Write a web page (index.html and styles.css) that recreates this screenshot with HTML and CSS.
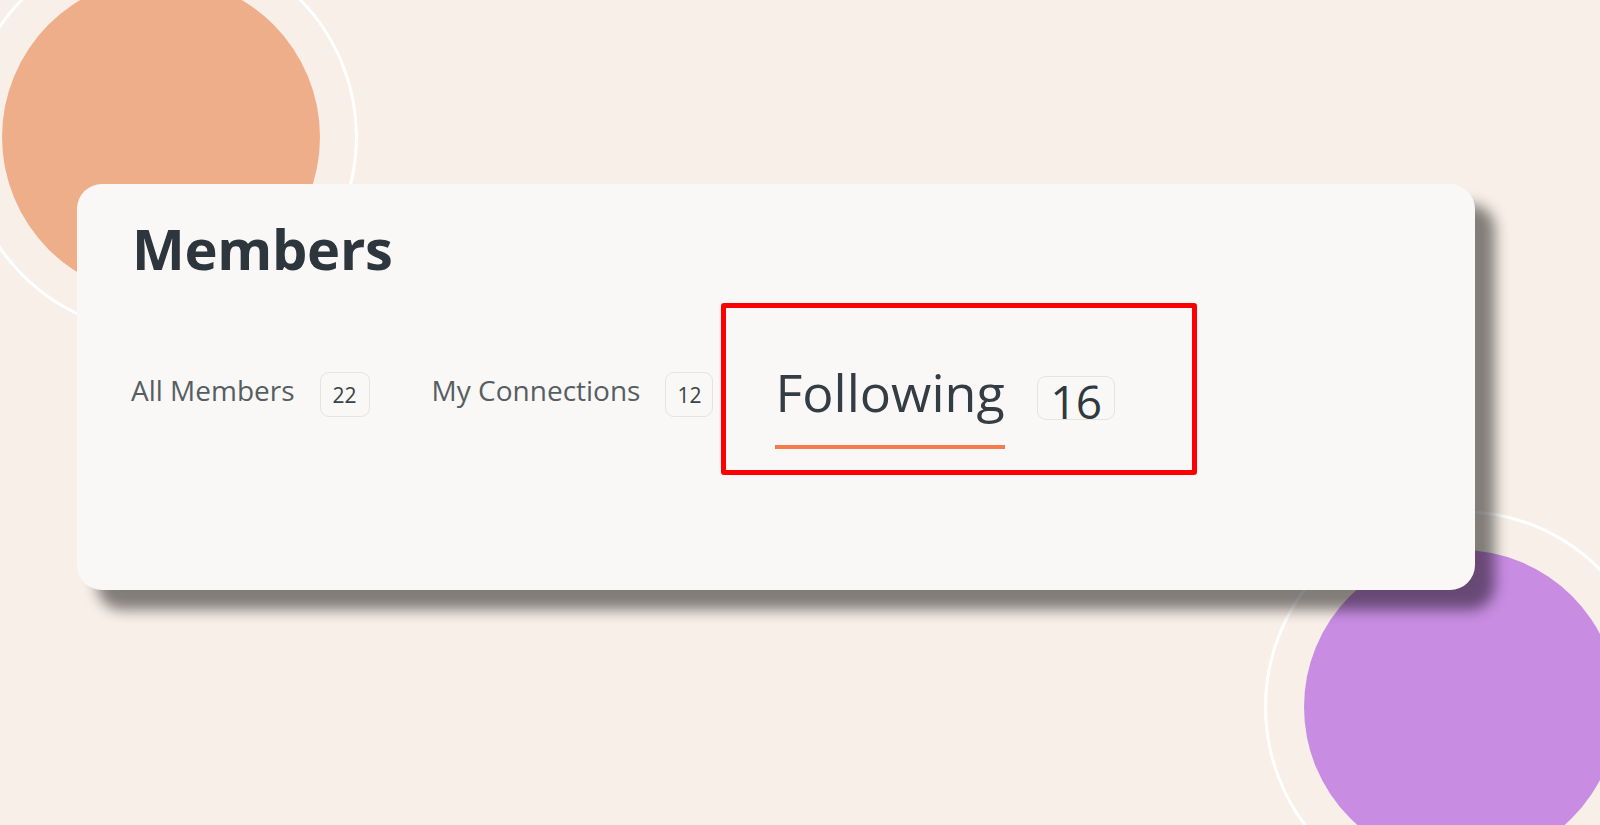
FILE: index.html
```html
<!DOCTYPE html>
<html lang="en">
<head>
<meta charset="utf-8">
<title>Members</title>
<link rel="stylesheet" href="styles.css">
</head>
<body>
<div class="page">
  <div class="ring ring-orange"></div>
  <div class="blob blob-orange"></div>
  <div class="ring ring-purple"></div>
  <div class="blob blob-purple"></div>

  <section class="card">
    <h1 class="title">Members</h1>
    <nav class="tabs">
      <div class="tab">
        <span class="tab-label">All Members</span>
        <span class="badge">22</span>
      </div>
      <div class="tab">
        <span class="tab-label">My Connections</span>
        <span class="badge badge-narrow">12</span>
      </div>
      <div class="tab tab-active">
        <span class="tab-label">Following</span>
        <span class="badge">16</span>
      </div>
    </nav>
    <div class="highlight"></div>
  </section>
</div>
</body>
</html>
```

FILE: styles.css
```css
* { box-sizing: border-box; }

html, body {
  margin: 0;
  padding: 0;
}

body {
  background: #f8efe8;
  font-family: "Open Sans", "Noto Sans", sans-serif;
  width: 1600px;
  height: 825px;
  overflow: hidden;
}

.page {
  position: relative;
  width: 1600px;
  height: 825px;
  overflow: hidden;
  padding: 184px 0 0 77px;
}

.blob, .ring {
  position: absolute;
  border-radius: 50%;
}

.blob-orange {
  left: 2px;
  top: -22px;
  width: 318px;
  height: 318px;
  background: #efae8a;
}

.ring-orange {
  left: -36px;
  top: -60px;
  width: 394px;
  height: 394px;
  border: 3px solid #ffffff;
}

.blob-purple {
  left: 1304px;
  top: 550px;
  width: 314px;
  height: 314px;
  background: #c88ce3;
}

.ring-purple {
  left: 1264px;
  top: 510px;
  width: 394px;
  height: 394px;
  border: 3px solid #ffffff;
}

.card {
  position: relative;
  z-index: 2;
  width: 1398px;
  height: 406px;
  background: #f9f8f6;
  border-radius: 25px;
  box-shadow: 20px 20px 14px rgba(0, 0, 0, 0.48);
  padding: 36px 54px 0 54px;
}

.title {
  margin: 0 0 0 1px;
  font-size: 56px;
  line-height: 1;
  font-weight: 700;
  color: #2c363c;
  letter-spacing: -0.3px;
}

.tabs {
  display: flex;
  align-items: flex-start;
  margin-top: 91px;
}

.tab {
  display: flex;
  align-items: flex-start;
  margin-right: 62px;
}

.tab-label {
  font-size: 28px;
  line-height: 1;
  color: #575e63;
  margin-top: 9px;
}

.badge {
  display: flex;
  align-items: center;
  justify-content: center;
  width: 50px;
  height: 45px;
  margin-left: 25px;
  margin-top: 5px;
  border: 1.5px solid #e6e4e1;
  border-radius: 9px;
  font-size: 21px;
  font-weight: 500;
  color: #3a4348;
}

.badge-narrow {
  width: 48px;
}

.tab-active .tab-label {
  font-size: 52px;
  color: #333d43;
  margin-top: -1px;
  padding-bottom: 27px;
  border-bottom: 4px solid #f47c4c;
}

.tab-active .badge {
  width: 78px;
  height: 44px;
  margin-left: 32px;
  margin-top: 9px;
  font-size: 46px;
  color: #2f393f;
  padding-top: 6px;
  letter-spacing: -1px;
}

.highlight {
  position: absolute;
  left: 644px;
  top: 119px;
  width: 476px;
  height: 172px;
  border: 5px solid #ff0000;
  border-radius: 3px;
}
```
